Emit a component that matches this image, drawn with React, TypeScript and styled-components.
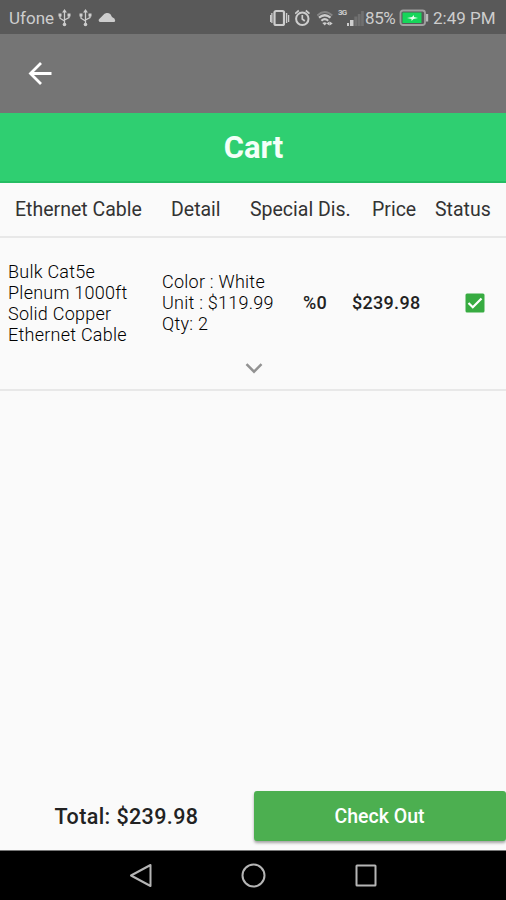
import React from "react";
import styled, { createGlobalStyle } from "styled-components";

const GlobalStyle = createGlobalStyle`
  * { box-sizing: border-box; }
  body { margin: 0; background: #fafafa; }
  svg { display: block; flex: none; }
`;

const Screen = styled.div`
  width: 506px;
  height: 900px;
  display: flex;
  flex-direction: column;
  overflow: hidden;
  background: #fafafa;
  color: #222;
  font-family: Roboto, "Liberation Sans", sans-serif;
`;

const StatusBar = styled.header`
  height: 34px;
  flex: none;
  display: flex;
  align-items: center;
  justify-content: space-between;
  padding: 1px 10px 0 9px;
  background: #595959;
  color: #cdcdcd;
`;

const StatusGroup = styled.div`
  display: flex;
  align-items: center;
`;

const StatusText = styled.span<{ $width: number; $spacing?: number }>`
  width: ${(p) => p.$width}px;
  font-size: 17px;
  line-height: 20px;
  white-space: nowrap;
  letter-spacing: ${(p) => p.$spacing ?? 0}px;
`;

const AppBar = styled.nav`
  height: 79px;
  flex: none;
  display: flex;
  align-items: center;
  padding-left: 25px;
  background: #757575;
`;

const BackButton = styled.button`
  padding: 0;
  border: 0;
  background: none;
  color: #fff;
`;

const Title = styled.h1`
  height: 70px;
  flex: none;
  margin: 0;
  padding-left: 1px;
  border-bottom: 2px solid #25bd63;
  background: #2fcf71;
  color: #f4fff8;
  font-size: 31px;
  font-weight: 700;
  line-height: 69px;
  text-align: center;
`;

const HeaderRow = styled.div`
  height: 55px;
  flex: none;
  display: grid;
  grid-template-columns: 156px 79px 122px 63px 1fr;
  padding-left: 15px;
  border-bottom: 2px solid #e8e8e8;
  font-size: 19.5px;
  line-height: 53px;
  white-space: nowrap;
  color: #333;
`;

const Item = styled.section`
  height: 153px;
  flex: none;
  border-bottom: 2px solid #e8e8e8;
`;

const ItemRow = styled.div`
  height: 120px;
  display: grid;
  grid-template-columns: 154px 141px 49px 113px 1fr;
  align-items: center;
  padding: 9px 0 0 8px;
`;

const Description = styled.div`
  font-size: 18px;
  font-weight: 300;
  line-height: 21px;
  letter-spacing: 0.25px;
  white-space: pre-line;
  color: #000;
`;

const Amount = styled.div`
  font-size: 18px;
  font-weight: 500;
  letter-spacing: 0.3px;
`;

const Expand = styled.button`
  display: flex;
  margin: 0 auto;
  padding: 0 0 0 1px;
  border: 0;
  background: none;
`;

const Space = styled.main`
  flex: 1;
`;

const Footer = styled.footer`
  height: 60px;
  flex: none;
  display: grid;
  grid-template-columns: 253px 253px;
  align-items: start;
  border-bottom: 1px solid #777;
`;

const Total = styled.div`
  font-size: 21.5px;
  font-weight: 500;
  line-height: 51px;
  letter-spacing: 0.4px;
  text-align: center;
`;

const CheckOut = styled.button`
  height: 50px;
  margin: 0 0 0 1px;
  padding: 0 1px 0 0;
  border: 0;
  border-radius: 3px;
  background: #4caf50;
  box-shadow: 0 2px 3px rgba(0, 0, 0, 0.35);
  color: #fff;
  font: 500 19.5px/52px Roboto, "Liberation Sans", sans-serif;
`;

const NavBar = styled.nav`
  height: 49px;
  flex: none;
  display: flex;
  justify-content: center;
  gap: 88px;
  padding-top: 12px;
  background: #000;
`;

const Usb = () => (
  <svg width="21" height="18" viewBox="0 0 21 18" fill="none" stroke="#cdcdcd" strokeWidth="1.3">
    <path d="M8.500 3v12M4 6v3.200L8.500 12M13 6v2.500L8.500 11" />
    <path d="M8.500 0l2.400 3.600H6.100z" fill="#cdcdcd" stroke="none" />
    <circle cx="8.500" cy="15.500" r="1.800" fill="#cdcdcd" stroke="none" />
    <path d="M2.500 4.500h3v3h-3zM11.500 4.500h3v3h-3z" fill="#cdcdcd" stroke="none" />
  </svg>
);

const Cloud = () => (
  <svg width="18" height="14" viewBox="0 0 18 14" fill="#cdcdcd">
    <path d="M2.300 11a1.800 1.800 0 0 1-.8-3.300L5 4.300A5 5 0 0 1 12.500 3.300L14 6q3.200 1.300 3.200 3.500 0 1.500-1.400 1.500z" />
  </svg>
);

const Vibrate = () => (
  <svg width="25" height="18" viewBox="1 0 25 18" fill="none" stroke="#cdcdcd">
    <rect x="5.500" y="2" width="9.500" height="14" rx="1.500" strokeWidth="2.200" />
    <path d="M2.900 4v10M17.600 4v10M1.500 6v7M19.600 6v7" strokeWidth="1.300" />
  </svg>
);

const Alarm = () => (
  <svg width="22" height="18" viewBox="0.500 0 22 18" fill="none" stroke="#cdcdcd">
    <circle cx="7.800" cy="9.800" r="6.200" strokeWidth="2" />
    <path d="M7.800 6v4l2.500 2M.6 4.700L4.300 1.500M15 4.700L11.300 1.500" strokeWidth="1.700" />
  </svg>
);

const Wifi = () => (
  <svg width="21" height="18" viewBox="0.500 0 21 18" fill="none">
    <path d="M.8 6.500Q8.300-.5 15.800 6.500" stroke="#858585" strokeWidth="1.800" />
    <path d="M2.500 8.700Q8.300 3.800 14 8.700M4.900 11.700Q8.300 8.700 11.700 11.700" stroke="#cdcdcd" strokeWidth="2.200" />
    <path d="M8.300 16.500l-2.500-2.500q2.500-1.500 4.500 0zM9.900 14.500l3-2v4zM13.200 12.500l3 2-3 2z" fill="#cdcdcd" />
  </svg>
);

const NetworkLabel = styled.span`
  width: 9px;
  height: 18px;
  color: #cdcdcd;
  font-size: 8px;
  font-weight: 700;
  line-height: 8px;
  letter-spacing: -0.8px;
`;

const Signal = () => (
  <svg width="18" height="18" viewBox="0 0 18 18">
    <path d="M-1 14h3v3h-3zM3 11h3.500v6H3z" fill="#cdcdcd" />
    <path d="M7.300 7.500h3V17h-3zM10.800 5h2.800v12h-2.800zM14.100 2h2.700v15h-2.700z" fill="#707070" />
  </svg>
);

const Battery = () => (
  <svg width="34" height="18" viewBox="0 0 34 18">
    <rect x="1.500" y="1.500" width="24.500" height="14.500" rx="2.500" fill="none" stroke="#a0a0a0" strokeWidth="1.800" />
    <rect x="3.500" y="3.500" width="19" height="10.500" fill="#16d65a" />
    <rect x="27" y="5" width="2.200" height="7.500" fill="#bbb" />
    <path d="M8 9l5-1 2-2v2l4 1-4.500 1-2 2v-2z" fill="#e5ffed" />
  </svg>
);

const columns = ["Ethernet Cable", "Detail", "Special Dis.", "Price", "Status"];

export default function App() {
  return (
    <>
      <GlobalStyle />
      <Screen>
        <StatusBar>
          <StatusGroup>
            <StatusText $width={47}>Ufone</StatusText>
            <Usb />
            <Usb />
            <Cloud />
          </StatusGroup>
          <StatusGroup>
            <Vibrate />
            <Alarm />
            <Wifi />
            <NetworkLabel>3G</NetworkLabel>
            <Signal />
            <StatusText $width={34} $spacing={-0.4}>85%</StatusText>
            <Battery />
            <StatusText $width={63}>2:49 PM</StatusText>
          </StatusGroup>
        </StatusBar>
        <AppBar>
          <BackButton aria-label="Back">
            <svg width="30" height="30" viewBox="0 0 30 30" fill="none" stroke="currentColor" strokeWidth="2.800">
              <path d="M26.500 14.500H6M16 4L5.500 14.500 16 25" />
            </svg>
          </BackButton>
        </AppBar>
        <Title>Cart</Title>
        <HeaderRow>
          {columns.map((name) => (
            <span key={name}>{name}</span>
          ))}
        </HeaderRow>
        <Item>
          <ItemRow>
            <Description>{"Bulk Cat5e\nPlenum 1000ft\nSolid Copper\nEthernet Cable"}</Description>
            <Description>{"Color : White\nUnit : $119.99\nQty: 2"}</Description>
            <Amount>%0</Amount>
            <Amount>$239.98</Amount>
            <svg width="20" height="20" viewBox="0 0 20 20">
              <rect x="0.500" y="0.500" width="19" height="19" rx="1.500" fill="#37ab41" />
              <path d="M3.500 10l4.300 4.300L16.500 5.500" fill="none" stroke="#fff" strokeWidth="2.200" />
            </svg>
          </ItemRow>
          <Expand aria-label="Expand">
            <svg width="18" height="20" viewBox="0 0 18 20" fill="none" stroke="#929292" strokeWidth="2.500">
              <path d="M1.500 6.200L9 13.700l7.500-7.500" />
            </svg>
          </Expand>
        </Item>
        <Space />
        <Footer>
          <Total>Total: $239.98</Total>
          <CheckOut>Check Out</CheckOut>
        </Footer>
        <NavBar>
          <svg width="25" height="25" viewBox="0 0 25 25" fill="none" stroke="#b5b5b5" strokeWidth="2" strokeLinejoin="round">
            <path d="M22.500 2v21L3 12.500z" />
          </svg>
          <svg width="25" height="25" viewBox="0 0 25 25" fill="none" stroke="#b5b5b5" strokeWidth="2">
            <circle cx="12.500" cy="12.500" r="11" />
          </svg>
          <svg width="25" height="25" viewBox="0 0 25 25" fill="none" stroke="#b5b5b5" strokeWidth="2">
            <rect x="2.500" y="2.500" width="19" height="20" rx="0.500" />
          </svg>
        </NavBar>
      </Screen>
    </>
  );
}
